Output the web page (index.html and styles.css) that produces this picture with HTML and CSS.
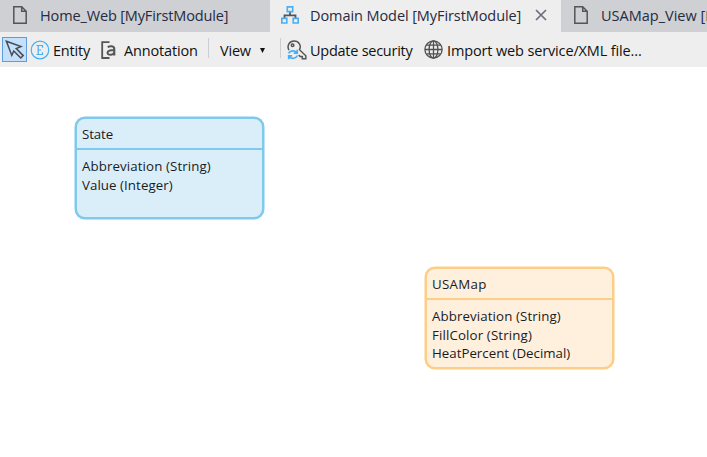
FILE: index.html
```html
<!DOCTYPE html>
<html lang="en">
<head>
<meta charset="utf-8">
<title>Domain Model</title>
<link rel="stylesheet" href="styles.css">
</head>
<body>
<nav class="tabs">
  <div class="tab tab-home">
    <svg class="doc-icon" width="14" height="18" viewBox="0 0 14 18"><path d="M.8.8H8.7L13.2 5.3V17.2H.8ZM8.7.8V5.3H13.2"/></svg>
    <span class="label t-home">Home_Web [MyFirstModule]</span>
  </div>
  <div class="tab tab-active">
    <svg class="tree-icon" width="18" height="18" viewBox="0 0 18 18"><path class="link" d="M9 6V9.3M3.5 12V9.3H14.5V12"/><path class="node" d="M6.3.9H11.7V5.6H6.3ZM.8 12.4H5.8V17H.8ZM12.2 12.4H17.2V17H12.2Z"/></svg>
    <span class="label t-domain">Domain Model [MyFirstModule]</span>
    <svg class="close-icon" width="12" height="12" viewBox="0 0 12 12"><path d="M1 1L11 11M11 1L1 11"/></svg>
  </div>
  <div class="tab tab-map">
    <svg class="doc-icon" width="14" height="18" viewBox="0 0 14 18"><path d="M.8.8H8.7L13.2 5.3V17.2H.8ZM8.7.8V5.3H13.2"/></svg>
    <span class="label t-map">USAMap_View [MyFirstModule]</span>
  </div>
</nav>
<div class="toolbar">
  <div class="pointer"><svg width="23" height="23" viewBox="0 0 23 23"><path d="M3.4 3.2L18 8.6L13.2 10.6L20.2 17.6L17.8 20L10.8 13L8.8 17.4Z"/></svg></div>
  <svg class="entity-icon" width="20" height="20" viewBox="0 0 20 20"><circle cx="10" cy="10" r="8.8"/><path d="M6.5 5.5H12.5V7.8M8.2 5.5V14.5M6.5 14.5H12.5V12.2M8.2 10H11.2"/></svg>
  <span class="label t-entity">Entity</span>
  <svg class="note-icon" width="16" height="18" viewBox="0 0 16 18"><path d="M8.5 1.2H1.2V17H8.5"/><path class="letter" d="M6.7 6.2C8.8 4.7 13.3 4.6 13.3 8V14.5M13.3 9.1C9 9.3 6.5 9.6 6.5 11.8C6.5 15 13.3 14.2 13.3 10.7"/></svg>
  <span class="label t-note">Annotation</span>
  <i class="sep sep-a"></i>
  <span class="label t-view">View</span>
  <svg class="arrow-icon" width="5" height="5" viewBox="0 0 5 5"><path d="M0 0H5L2.5 5Z"/></svg>
  <i class="sep sep-b"></i>
  <svg class="key-icon" width="20" height="20" viewBox="0 0 20 20"><path class="key" d="M2 10.2C-.5 5.8 2.6 1 7 1C12 1 14.6 5.7 12.5 9.7L18.8 15.8V18.8H15.3V16.5H13L11.8 15"/><circle class="hole" cx="5.6" cy="5.2" r="1.3"/><path class="sync" d="M1.5 13.4C3 10.5 7.2 10 9.6 12.4M10.2 9.8V13.2H6.8M10.4 15.5C9 18.7 4.8 19.2 2.3 16.8M1.7 19.3V15.9H5.1"/></svg>
  <span class="label t-update">Update security</span>
  <svg class="globe-icon" width="19" height="19" viewBox="0 0 19 19"><circle cx="9.5" cy="9.5" r="8.6"/><ellipse cx="9.5" cy="9.5" rx="4.4" ry="8.6"/><path d="M9.5 1V18M1 9.5H18M2.5 5.2H16.5M2.5 13.8H16.5"/></svg>
  <span class="label t-import">Import web service/XML file...</span>
</div>
<main class="canvas">
  <section class="entity blue">
    <h2><span class="e-state">State</span></h2>
    <ul><li class="e-abbr">Abbreviation (String)</li><li class="e-value">Value (Integer)</li></ul>
  </section>
  <section class="entity orange">
    <h2><span class="e-usa">USAMap</span></h2>
    <ul><li class="e-abbr">Abbreviation (String)</li><li class="e-fill">FillColor (String)</li><li class="e-heat">HeatPercent (Decimal)</li></ul>
  </section>
</main>
</body>
</html>
```
FILE: styles.css
```css
* { box-sizing: border-box; }
body {
  margin: 0;
  width: 707px;
  height: 457px;
  overflow: hidden;
  background: #fff;
  font-family: "Open Sans", "Noto Sans", sans-serif;
  font-size: 14.5px;
  color: #111;
}
svg { display: block; flex: none; fill: none; }
.label { white-space: nowrap; flex: none; }
.tabs { display: flex; height: 32px; background: #ced0d4; color: #252b40; }
.tab { display: flex; align-items: center; flex: none; height: 32px; line-height: 32px; }
.tab-home { width: 270px; padding-left: 13px; }
.tab-active { width: 291px; padding-left: 11px; background: #eee; }
.tab-map { width: 146px; padding-left: 13px; overflow: hidden; }
.t-home { letter-spacing: -.14px; }
.t-domain { width: 211px; letter-spacing: -.08px; }
.doc-icon { margin-right: 13px; margin-top: -2px; stroke: #555; stroke-width: 1.5; }
.tree-icon { margin-right: 11px; margin-top: -2px; }
.tree-icon .link { stroke: #555; stroke-width: 1.8; }
.tree-icon .node { stroke: #48aff5; stroke-width: 1.6; }
.close-icon { margin-left: 14px; margin-top: -2px; stroke: #6b6e7d; stroke-width: 1.7; }

.toolbar {
  display: flex;
  align-items: center;
  height: 35px;
  padding-left: 2px;
  background: #eee;
  color: #111;
}
.toolbar .label { height: 35px; line-height: 37px; }
.t-entity { width: 38px; letter-spacing: -.2px; }
.t-note { width: 74px; letter-spacing: -.15px; }
.t-view { width: 32px; letter-spacing: -.2px; }
.t-update { width: 103px; letter-spacing: -.26px; }
.t-import { letter-spacing: -.14px; }
.pointer { width: 25px; height: 25px; margin-right: 3px; border: 1px solid #5c9ddd; background: #c4e0fc; flex: none; }
.pointer svg { stroke: #484c52; stroke-width: 1.5; }
.entity-icon { margin-right: 3px; stroke: #48aff5; stroke-width: 1.2; }
.note-icon { margin-left: 10px; margin-right: 7px; stroke: #555; stroke-width: 1.8; }
.note-icon .letter { stroke-width: 2; }
.sep { width: 1px; height: 20px; background: #cdced3; flex: none; margin-top: -3px; }
.sep-a { margin-left: 10px; margin-right: 11px; }
.sep-b { margin-left: 15px; margin-right: 6px; }
.arrow-icon { margin-left: 8px; margin-top: 2px; fill: #111; }
.key-icon { margin-right: 3px; }
.key-icon .key, .key-icon .hole { stroke: #555; stroke-width: 1.5; }
.key-icon .sync { stroke: #48aff5; stroke-width: 1.7; }
.globe-icon { margin-left: 11px; margin-right: 4px; stroke: #505050; stroke-width: 1.3; }

.canvas { position: relative; height: 390px; font-size: 13.3px; color: #1b1b1b; }
.entity { position: absolute; width: 189px; height: 102px; border: 2px solid; border-radius: 10px; }
.blue { left: 75px; top: 50px; border-color: #7fcaec; background: #daeefa; box-shadow: 0 0 0 .5px #7fcaec; }
.orange { left: 425px; top: 200px; border-color: #fdce87; background: #ffefdd; box-shadow: 0 0 0 .5px #fdce87; }
.entity h2 {
  height: 31px;
  margin: 0;
  padding-left: 5px;
  border-bottom: 2px solid;
  border-color: inherit;
  font-size: inherit;
  font-weight: 400;
  line-height: 30px;
}
.entity ul { margin: 0; padding: 7px 0 0 5px; list-style: none; }
.entity li { width: max-content; height: 18.7px; line-height: 19px; white-space: nowrap; }
.e-state { letter-spacing: -.1px; }
.e-abbr { letter-spacing: .1px; }
.e-value { letter-spacing: .06px; }
.e-usa { letter-spacing: .3px; }
.e-fill { letter-spacing: .13px; }
.e-heat { letter-spacing: 0; }
```
